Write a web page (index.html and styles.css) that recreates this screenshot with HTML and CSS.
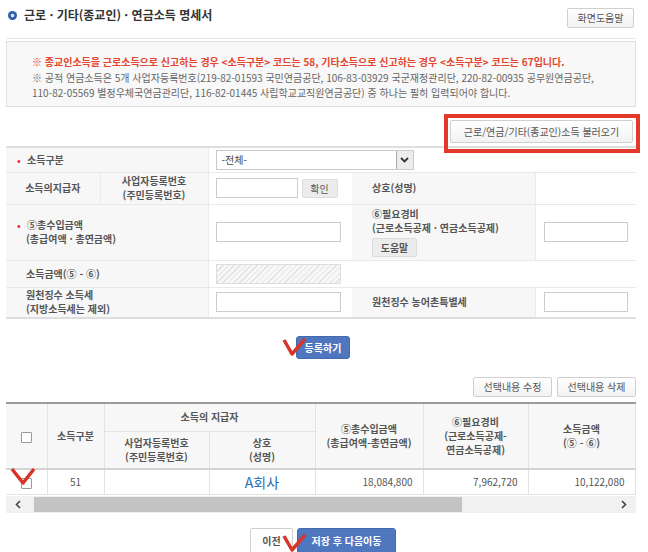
FILE: index.html
```html
<!DOCTYPE html>
<html lang="ko">
<head>
<meta charset="utf-8">
<title>근로 · 기타(종교인) · 연금소득 명세서</title>
<link rel="stylesheet" href="styles.css">
</head>
<body>
<div class="page">
  <header class="head">
    <h1 class="title"><span class="bullet"></span>근로 · 기타(종교인) · 연금소득 명세서</h1>
    <button class="btn btn-help">화면도움말</button>
  </header>

  <div class="notice">
    <p class="notice-red">※ 종교인소득을 근로소득으로 신고하는 경우 &lt;소득구분&gt; 코드는 58, 기타소득으로 신고하는 경우 &lt;소득구분&gt; 코드는 67입니다.</p>
    <p class="notice-gray">※ 공적 연금소득은 5개 사업자등록번호(219-82-01593 국민연금공단, 106-83-03929 국군재정관리단, 220-82-00935 공무원연금공단,<br>110-82-05569 별정우체국연금관리단, 116-82-01445 사립학교교직원연금공단) 중 하나는 필히 입력되어야 합니다.</p>
  </div>

  <div class="load-row">
    <div class="mark">
      <button class="btn btn-load">근로/연금/기타(종교인)소득 불러오기</button>
      <span class="redbox"></span>
    </div>
  </div>

  <table class="form">
    <colgroup><col class="c1"><col class="c2"><col class="c3"><col class="c4"><col class="c5"></colgroup>
    <tr class="r1">
      <th colspan="2" class="lbl"><span class="dot">•</span>소득구분</th>
      <td colspan="3" class="val">
        <div class="select"><span class="sel-text">-전체-</span><span class="sel-arrow"><svg width="9" height="6" viewBox="0 0 9 6"><path d="M1 1 L4.5 4.5 L8 1" fill="none" stroke="#333" stroke-width="1.8"/></svg></span></div>
      </td>
    </tr>
    <tr class="r2">
      <th class="lbl lbl-ctr">소득의지급자</th>
      <th class="lbl lbl-ctr">사업자등록번호<br>(주민등록번호)</th>
      <td class="val"><div class="inline"><input class="inp w82" type="text"><button class="btn-gray btn-ok">확인</button></div></td>
      <th class="lbl lbl-r">상호(성명)</th>
      <td class="val val-r"></td>
    </tr>
    <tr class="r3">
      <th colspan="2" class="lbl"><span class="dot">•</span>⑤총수입금액<br>(총급여액 · 총연금액)</th>
      <td class="val"><input class="inp w125" type="text"></td>
      <th class="lbl lbl-r">⑥필요경비<br>(근로소득공제 · 연금소득공제)<br><button class="btn-gray btn-helpsm">도움말</button></th>
      <td class="val val-r"><input class="inp w84" type="text"></td>
    </tr>
    <tr class="r4">
      <th colspan="2" class="lbl">소득금액(⑤ - ⑥)</th>
      <td class="val"><div class="inp w125 hatch"></div></td>
      <td colspan="2" class="val"></td>
    </tr>
    <tr class="r5">
      <th colspan="2" class="lbl">원천징수 소득세<br>(지방소득세는 제외)</th>
      <td class="val"><input class="inp w125" type="text"></td>
      <th class="lbl lbl-r">원천징수 농어촌특별세</th>
      <td class="val val-r"><input class="inp w84" type="text"></td>
    </tr>
  </table>

  <div class="center reg-row">
    <span class="rel">
      <button class="btn-blue btn-reg">등록하기</button>
      <svg class="check check-reg" width="24" height="20" viewBox="0 0 24 20"><path d="M2 3 L10 17 L23 2" fill="none" stroke="#d8342a" stroke-width="3.5" stroke-linejoin="round"/></svg>
    </span>
  </div>

  <div class="sel-row">
    <button class="btn btn-sel">선택내용 수정</button>
    <button class="btn btn-sel">선택내용 삭제</button>
  </div>

  <div class="grid">
    <table class="list">
      <colgroup><col class="k1"><col class="k2"><col class="k3"><col class="k4"><col class="k5"><col class="k6"><col class="k7"><col class="k8"></colgroup>
      <thead>
        <tr class="h1">
          <th rowspan="2" class="first"><span class="chk"></span></th>
          <th rowspan="2">소득구분</th>
          <th colspan="2">소득의 지급자</th>
          <th rowspan="2">⑤총수입금액<br>(총급여액-총연금액)</th>
          <th rowspan="2">⑥필요경비<br>(근로소득공제-<br>연금소득공제)</th>
          <th rowspan="2">소득금액<br>(⑤ - ⑥)</th>
          <th rowspan="2"></th>
        </tr>
        <tr class="h2">
          <th>사업자등록번호<br>(주민등록번호)</th>
          <th>상호<br>(성명)</th>
        </tr>
      </thead>
      <tbody>
        <tr>
          <td class="first chk-cell"><span class="chk"></span><svg class="check check-row" width="26" height="18" viewBox="0 0 26 18"><path d="M2 2 L13 16 L24 2" fill="none" stroke="#d8342a" stroke-width="3.5" stroke-linejoin="round"/></svg></td>
          <td>51</td>
          <td></td>
          <td class="company">A회사</td>
          <td class="num">18,084,800</td>
          <td class="num">7,962,720</td>
          <td class="num">10,122,080</td>
          <td class="num"></td>
        </tr>
      </tbody>
    </table>
  </div>
  <div class="hscroll">
    <span class="arr"><svg width="6" height="9" viewBox="0 0 6 9"><path d="M5 1 L1.5 4.5 L5 8" fill="none" stroke="#444" stroke-width="1.6"/></svg></span>
    <span class="track"><span class="thumb"></span></span>
    <span class="arr"><svg width="6" height="9" viewBox="0 0 6 9"><path d="M1 1 L4.5 4.5 L1 8" fill="none" stroke="#444" stroke-width="1.6"/></svg></span>
  </div>

  <div class="actions">
    <button class="btn btn-prev">이전</button>
    <span class="rel">
      <button class="btn-blue btn-next">저장 후 다음이동</button>
      <svg class="check check-next" width="24" height="20" viewBox="0 0 24 20"><path d="M2 3 L10 17 L23 2" fill="none" stroke="#d8342a" stroke-width="3.5" stroke-linejoin="round"/></svg>
    </span>
  </div>
</div>
</body>
</html>
```

FILE: styles.css
```css
* { box-sizing: border-box; margin: 0; padding: 0; }
html, body { background: #fff; }
body {
  font-family: "Noto Sans CJK KR", "Noto Sans", sans-serif;
  font-size: 10px;
  line-height: 14px;
  color: #555;
}
button { font-family: inherit; font-size: 10px; cursor: pointer; }
input { font-family: inherit; font-size: 10px; }

.page { width: 636px; padding-left: 6px; }

/* header */
.head {
  display: flex;
  justify-content: space-between;
  align-items: flex-start;
  height: 39px;
  padding-top: 5px;
  border-bottom: 1px solid #e8e8e8;
}
.title {
  display: flex;
  align-items: center;
  height: 20px;
  line-height: 20px;
  font-size: 12px;
  font-weight: 700;
  color: #333;
  padding-left: 2px;
}
.bullet {
  width: 9px; height: 9px; border-radius: 50%;
  background: radial-gradient(circle, #d6e4ff 0 1.5px, #2f5fae 2.2px);
  margin-right: 7px;
}
.btn {
  height: 20px;
  padding: 0 7px;
  border: 1px solid #cfcfcf;
  border-radius: 2px;
  background: linear-gradient(#ffffff, #f2f2f2);
  color: #555;
  line-height: 18px;
  white-space: nowrap;
}
.btn-help { width: 67px; margin-top: 3px; margin-right: 2px; }

/* notice */
.notice {
  margin-top: 2px;
  height: 66px;
  border: 1px solid #dedede;
  background: #f8f8f8;
  padding: 12px 0 0 25px;
  white-space: nowrap;
}
.notice-red { color: #e4452f; font-weight: 700; line-height: 15px; }
.notice-gray { color: #666; line-height: 15px; margin-top: 1px; }

/* load button with red annotation box */
.load-row { display: flex; justify-content: flex-end; margin-top: 13px; padding-right: 3px; }
.mark { position: relative; }
.btn-load { height: 23px; width: 183px; padding: 0; }
.redbox {
  position: absolute;
  left: -6px; right: -7px; top: -6px; bottom: -10px;
  border: 4px solid #e2392a;
}

/* form table */
.form {
  width: 630px;
  border-collapse: collapse;
  table-layout: fixed;
  margin-top: 3px;
  border-top: 2px solid #dedede;
  border-bottom: 2px solid #dedede;
}
.c1 { width: 94px; } .c2 { width: 108px; } .c3 { width: 144px; } .c4 { width: 183px; } .c5 { width: 101px; }
.form th, .form td { border-bottom: 1px solid #e9e9e9; vertical-align: middle; padding: 0; }
.lbl {
  background: #f7f7f7;
  font-weight: 700;
  color: #555;
  text-align: left;
  padding-left: 20px !important;
  border-right: 1px solid #ececec;
}
.lbl-ctr { text-align: center; padding-left: 0 !important; }
.lbl-r { padding-left: 20px !important; }
.dot { display: inline-block; width: 10px; margin-left: -9px; color: #e33; }
.val { padding-left: 7px !important; }
.val-r { padding-left: 8px !important; }
.r1 td, .r1 th { height: 25px; }
.r2 td, .r2 th { height: 32px; }
.r3 td, .r3 th { height: 56px; }
.r4 td, .r4 th { height: 27px; }
.r5 td, .r5 th { height: 31px; }

.select {
  display: flex;
  width: 198px;
  height: 20px;
  border: 1px solid #cacaca;
  background: #fff;
  align-items: center;
}
.sel-text { flex: 1; padding-left: 5px; color: #444; }
.sel-arrow {
  width: 17px; height: 18px;
  display: flex; align-items: center; justify-content: center;
  border-left: 1px solid #a9a9a9;
  background: #ededed;
}
.inp { display: block; height: 20px; border: 1px solid #cccccc; background: #fff; }
.w82 { width: 82px; } .w125 { width: 125px; } .w84 { width: 84px; }
.hatch {
  border-color: #dddddd;
  background: repeating-linear-gradient(135deg, #e2e2e2 0 1px, #f7f7f7 1px 4px);
}
.inline { display: flex; gap: 4px; align-items: center; }
.btn-gray {
  height: 19px;
  border: 1px solid #dcdcdc;
  border-radius: 2px;
  background: #ececec;
  color: #555;
  padding: 0;
}
.btn-ok { width: 36px; }
.btn-helpsm { width: 45px; margin-top: 3px; display: block; font-weight: 700; }

/* register */
.center { display: flex; justify-content: center; }
.reg-row { margin-top: 17px; padding-left: 4px; }
.rel { position: relative; display: inline-block; }
.btn-blue {
  background: #4f77bf;
  border: 1px solid #4469ad;
  border-radius: 3px;
  color: #fff;
  font-weight: 700;
}
.btn-reg { width: 54px; height: 23px; display: block; }
.check { position: absolute; }
.check-reg { left: -14px; top: 1px; }

/* selection buttons */
.sel-row { display: flex; justify-content: flex-end; gap: 5px; margin-top: 18px; }
.btn-sel { width: 79px; padding: 0; }

/* list table */
.grid { margin-top: 5px; width: 630px; overflow: hidden; }
.list {
  width: 729px;
  table-layout: fixed;
  border-collapse: collapse;
  border-top: 2px solid #9c9c9c;
}
.k1 { width: 41px; } .k2 { width: 57px; } .k3 { width: 105px; } .k4 { width: 106px; }
.k5 { width: 108px; } .k6 { width: 105px; } .k7 { width: 107px; } .k8 { width: 100px; }
.list th {
  background: #f7f7f7;
  font-weight: 700;
  color: #555;
  border: 1px solid #e3e3e3;
  text-align: center;
  vertical-align: middle;
  padding: 0;
}
.list .h1 th { height: 28px; border-top: none; }
.list .h2 th { height: 38px; }
.list thead tr:last-child th, .list thead th[rowspan] { border-bottom: 2px solid #d4d4d4; }
.list .first { border-left: none; }
.list td {
  height: 25px;
  border: 1px solid #e3e3e3;
  border-top: none;
  text-align: center;
  vertical-align: middle;
  color: #555;
}
.list td.num { text-align: right; padding-right: 10px; }
.list td.company { color: #2f6db5; font-size: 14px; }
.chk {
  display: inline-block;
  width: 11px; height: 11px;
  border: 1px solid #999;
  border-radius: 1px;
  background: #fff;
  vertical-align: middle;
}
.chk-cell { position: relative; }
.check-row { left: 4px; top: -3px; }

/* horizontal scrollbar */
.hscroll {
  display: flex;
  align-items: center;
  width: 630px;
  height: 17px;
  margin-top: 1px;
  background: #f1f1f1;
}
.arr { width: 24px; height: 17px; display: flex; align-items: center; justify-content: center; }
.track { flex: 1; height: 17px; display: flex; align-items: center; padding-left: 4px; }
.thumb { width: 428px; height: 15px; background: #c3c3c3; }

/* bottom actions */
.actions { display: flex; justify-content: center; gap: 4px; margin-top: 15px; padding-left: 4px; }
.btn-prev { width: 43px; height: 26px; background: #fff; font-weight: 700; }
.btn-next { width: 99px; height: 26px; display: block; }
.check-next { left: -15px; top: 5px; }
```
